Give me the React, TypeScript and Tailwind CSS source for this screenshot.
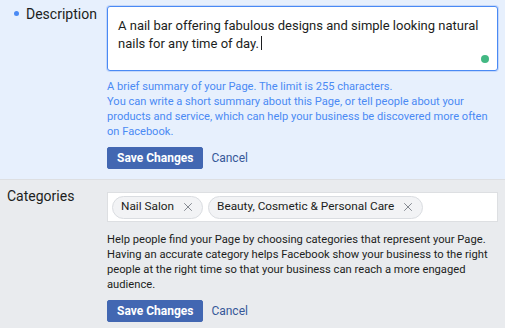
import { X } from "lucide-react";

const FONT = { fontFamily: 'Roboto, "Liberation Sans", Arial, sans-serif' };

function Buttons() {
  return (
    <div className="flex items-center gap-[8px]">
      <button className="h-[22px] rounded-[2px] border border-[#4267b2] bg-[#4267b2] px-[9px] text-[12px] font-bold text-white">
        Save Changes
      </button>
      <button className="text-[12px] text-[#365899]">Cancel</button>
    </div>
  );
}

function Tag({ label }: { label: string }) {
  return (
    <span className="flex h-[23px] items-center gap-[7px] rounded-full border border-[#dadde1] bg-[#f2f3f5] pl-[8px] pr-[7px] text-[11.8px] text-[#1c1e21]">
      {label}
      <X size={14} strokeWidth={1.3} className="text-[#606770]" />
    </span>
  );
}

export default function App() {
  return (
    <div className="h-[328px] w-[505px] overflow-hidden bg-[#e9ebee]" style={FONT}>
      {/* Description — editing state */}
      <div className="flex h-[180px] border-b border-[#dddfe2] bg-[#e7f0fd] pt-[6px]">
        <div className="flex w-[107px] items-start pl-[14px]">
          <span className="mr-[7px] mt-[5px] h-[5px] w-[5px] rounded-full bg-[#4a8af4]" />
          <span className="text-[14px] leading-[16px] text-[#1c1e21]">Description</span>
        </div>
        <div className="flex w-[391px] flex-col">
          <div className="relative h-[65px] rounded-[3px] border border-[#4a8af4] bg-white px-[10px] pt-[11px] text-[13px] leading-[16px] text-[#1c1e21] shadow-[0_0_0_1px_#c5d8fa]">
            A nail bar offering fabulous designs and simple looking natural nails for any time of day.
            <span className="ml-[2px] inline-block h-[14px] w-px translate-y-[2px] bg-[#1c1e21]" />
            <span className="absolute bottom-[7px] right-[8px] h-[8px] w-[8px] rounded-full bg-[#42b883]" />
          </div>
          <div className="mt-[8px] text-[11.1px] leading-[15px] text-[#4a8af4]">
            <div>A brief summary of your Page. The limit is 255 characters.</div>
            <div>
              You can write a short summary about this Page, or tell people about your products and
              service, which can help your business be discovered more often on Facebook.
            </div>
          </div>
          <div className="mt-[8px]">
            <Buttons />
          </div>
        </div>
      </div>

      {/* Categories */}
      <div className="flex pt-[12px]">
        <div className="-mt-[4px] w-[107px] pl-[7px] text-[14px] leading-[16px] text-[#1c1e21]">
          Categories
        </div>
        <div className="flex w-[391px] flex-col">
          <div className="flex h-[30px] items-center gap-[5px] border border-[#dddfe2] bg-white px-[4px]">
            <Tag label="Nail Salon" />
            <Tag label="Beauty, Cosmetic & Personal Care" />
          </div>
          <div className="mt-[10px] text-[11.2px] leading-[15px] text-[#1c1e21]">
            Help people find your Page by choosing categories that represent your Page. Having an
            accurate category helps Facebook show your business to the right people at the right
            time so that your business can reach a more engaged audience.
          </div>
          <div className="mt-[8px]">
            <Buttons />
          </div>
        </div>
      </div>
    </div>
  );
}
